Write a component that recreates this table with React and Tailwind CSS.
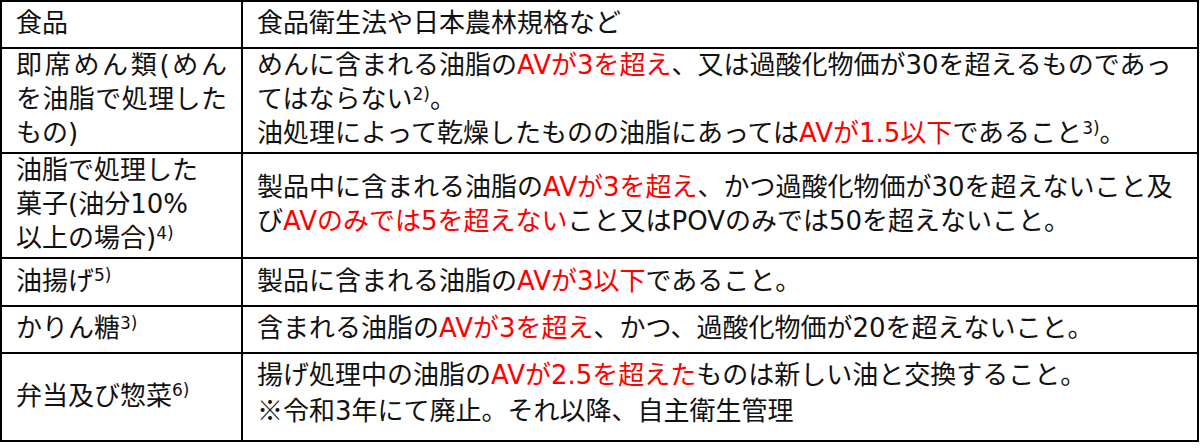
import React from "react";

const R = ({ children }) => <span className="text-[#ff0000]">{children}</span>;
const S = ({ children }) => <sup className="text-[17px]">{children}</sup>;
const L = ({ children, j }) => (
  <span className={j ? "block whitespace-nowrap text-justify [text-align-last:justify]" : "block whitespace-nowrap"}>
    {children}
  </span>
);

function Cell({ children, top }) {
  return (
    <div className={`bg-white flex px-[14px] ${top ? "items-start pt-[4px]" : "items-center pb-[3px]"}`}>
      <div className="w-full">{children}</div>
    </div>
  );
}

export default function App() {
  return (
    <div className="bg-white w-[1200px] h-[448px]">
      <div className="grid w-[1199px] grid-cols-[239px_1fr] grid-rows-[45px_103px_103px_46px_45px_86px] gap-[2px] bg-black p-[2px] font-['DejaVu_Sans','Noto_Sans_CJK_JP',sans-serif] text-[26px] leading-[34px] text-[#111]">
        <Cell><L>食品</L></Cell>
        <Cell><L>食品衛生法や日本農林規格など</L></Cell>

        <Cell>
          <L j>即席めん類(めん</L>
          <L j>を油脂で処理した</L>
          <L>もの)</L>
        </Cell>
        <Cell>
          <L>めんに含まれる油脂の<R>AVが3を超え</R>、又は過酸化物価が30を超えるものであっ</L>
          <L>てはならない<S>2)</S>。</L>
          <L>油処理によって乾燥したものの油脂にあっては<R>AVが1.5以下</R>であること<S>3)</S>。</L>
        </Cell>

        <Cell>
          <L>油脂で処理した</L>
          <L>菓子(油分10%</L>
          <L>以上の場合)<S>4)</S></L>
        </Cell>
        <Cell>
          <L>製品中に含まれる油脂の<R>AVが3を超え</R>、かつ過酸化物価が30を超えないこと及</L>
          <L>び<R>AVのみでは5を超えない</R>こと又はPOVのみでは50を超えないこと。</L>
        </Cell>

        <Cell><L>油揚げ<S>5)</S></L></Cell>
        <Cell><L>製品に含まれる油脂の<R>AVが3以下</R>であること。</L></Cell>

        <Cell><L>かりん糖<S>3)</S></L></Cell>
        <Cell><L>含まれる油脂の<R>AVが3を超え</R>、かつ、過酸化物価が20を超えないこと。</L></Cell>

        <Cell><L>弁当及び惣菜<S>6)</S></L></Cell>
        <Cell top>
          <L>揚げ処理中の油脂の<R>AVが2.5を超えた</R>ものは新しい油と交換すること。</L>
          <L><span className="font-['Noto_Sans_CJK_JP',sans-serif]">※</span>令和3年にて廃止。それ以降、自主衛生管理</L>
        </Cell>
      </div>
    </div>
  );
}
